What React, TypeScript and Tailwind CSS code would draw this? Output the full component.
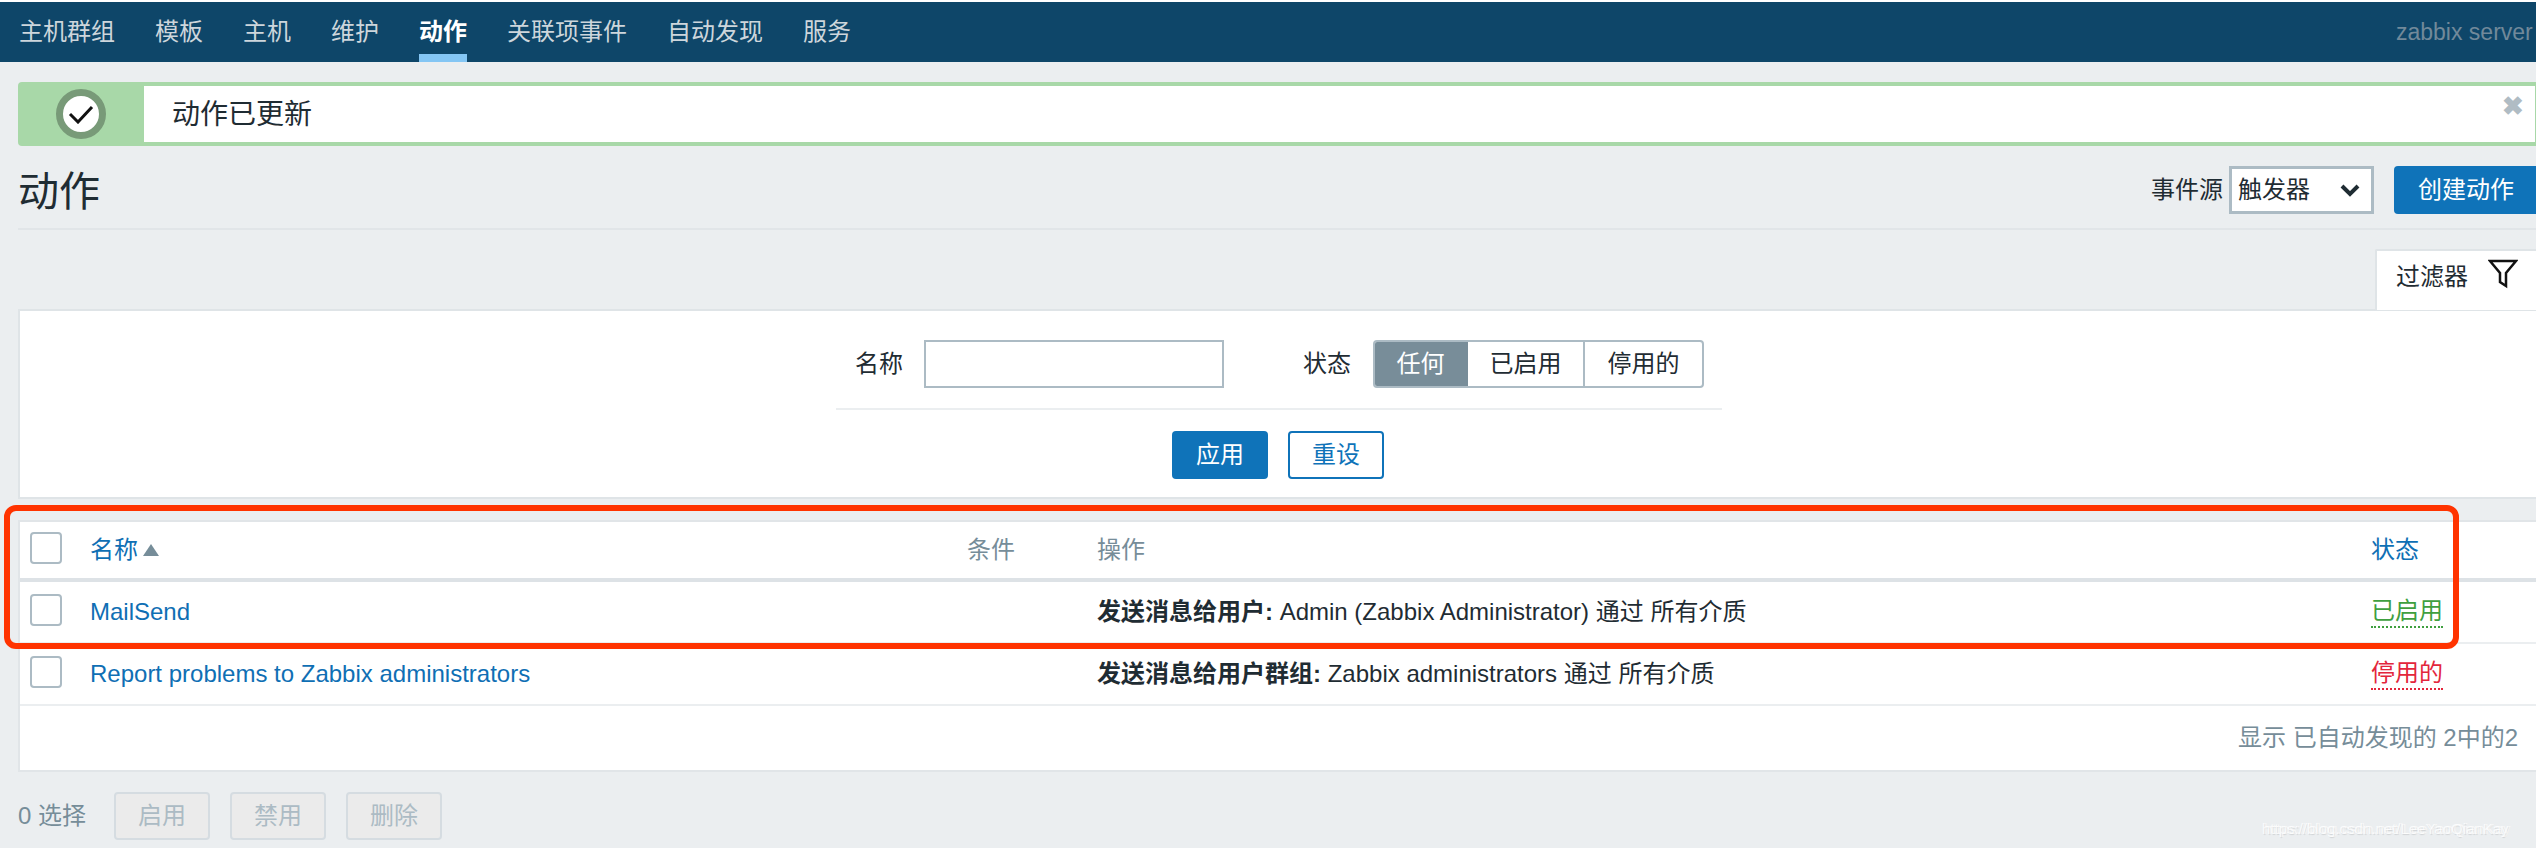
import React from 'react';

const NAV_ITEMS = ['主机群组', '模板', '主机', '维护', '动作', '关联项事件', '自动发现', '服务'];
const FONT = "font-['Liberation_Sans','Noto_Sans_CJK_SC',sans-serif]";

const Checkbox = () => (
  <span className="block w-[32px] h-[32px] -mt-[4px] shrink-0 rounded-[4px] border-[2px] border-[#acbbc4] bg-white" />
);

const ActionButton = ({ label }: { label: string }) => (
  <button className="w-[96px] h-[48px] rounded-[4px] border-[2px] border-[#d5dce1] bg-[#ebebeb] text-[#acbbc4] text-[24px]">
    {label}
  </button>
);

const Row = ({
  name,
  op,
  opRest,
  status,
  statusClass,
}: {
  name: string;
  op: string;
  opRest: string;
  status: string;
  statusClass: string;
}) => (
  <div className="flex items-center h-[62px] border-b-[2px] border-[#ebeef0]">
    <div className="w-[70px] pl-[10px]">
      <Checkbox />
    </div>
    <div className="w-[1007px] text-[#0f6fb4]">{name}</div>
    <div className="w-[1274px]">
      <b className="font-bold">{op}</b> {opRest}
    </div>
    <span className={`border-b-[2px] border-dotted leading-[30px] ${statusClass}`}>{status}</span>
  </div>
);

export default function App() {
  return (
    <div className={`relative w-[2536px] h-[848px] overflow-hidden bg-[#ebeef0] text-[24px] text-[#1f2c33] ${FONT}`}>
      {/* top bar */}
      <div className="h-[2px] bg-white" />
      <nav className="flex justify-between h-[60px] bg-[#0e4669] pl-[19px]">
        <div className="flex gap-[40px]">
          {NAV_ITEMS.map(item => (
            <div
              key={item}
              className={`h-[60px] pt-[15px] leading-[30px] border-b-[8px] ${
                item === '动作' ? 'text-white font-bold border-[#84c6f4]' : 'text-[#cdd6dc] border-transparent'
              }`}
            >
              {item}
            </div>
          ))}
        </div>
        <div className="whitespace-nowrap w-[140px] pt-[15px] text-[23px] leading-[30px] text-[#71899a]">zabbix server</div>
      </nav>

      {/* success message */}
      <div className="ml-[18px] mt-[20px] h-[64px] flex rounded-l-[4px] bg-[#a8d8a8] pr-[1px]">
        <div className="w-[126px] flex items-center justify-center">
          <div className="w-[50px] h-[50px] rounded-full border-[7px] border-[#789a78] bg-white flex items-center justify-center">
            <svg width="26" height="20" viewBox="0 0 26 20" fill="none">
              <path d="M2 10 L10 18 L24 3" stroke="#111" strokeWidth="3" />
            </svg>
          </div>
        </div>
        <div className="flex-1 my-[4px] bg-white flex justify-between pl-[28px] pr-[11px]">
          <span className="text-[28px] leading-[58px]">动作已更新</span>
          <span className="text-[#b0bcc4] text-[26px] font-bold leading-[40px]">✖</span>
        </div>
      </div>

      {/* title row */}
      <div className="ml-[18px] mt-[20px] h-[64px] pb-[16px] flex items-start justify-between border-b-[2px] border-[#e1e5e8]">
        <h1 className="text-[41px] leading-[52px]">动作</h1>
        <div className="flex items-center">
          <span className="w-[78px]">事件源</span>
          <div className="w-[145px] h-[48px] border-[3px] border-[#acbbc4] bg-white flex items-center justify-between pl-[6px] pr-[11px]">
            <span>触发器</span>
            <svg width="20" height="14" viewBox="0 0 20 14" fill="none">
              <path d="M2 3 L10 11 L18 3" stroke="#1f2c33" strokeWidth="4" />
            </svg>
          </div>
          <button className="ml-[20px] w-[142px] h-[48px] rounded-l-[4px] bg-[#0f73b9] text-white text-left pl-[24px]">
            创建动作
          </button>
        </div>
      </div>

      {/* filter tab */}
      <div className="flex justify-end mt-[19px]">
        <div className="w-[161px] h-[61px] bg-white border-l-[2px] border-t-[2px] border-[#dfe4e7] rounded-tl-[2px] flex items-start pl-[19px] pt-[8px]">
          <span className="leading-[36px] w-[92px]">过滤器</span>
          <svg width="30" height="30" viewBox="0 0 30 30" fill="none">
            <path d="M2 2 H28 L18 14 V27 L12 23 V14 Z" stroke="#111" strokeWidth="2.5" />
          </svg>
        </div>
      </div>

      {/* filter panel */}
      <div className="ml-[18px] h-[190px] -mt-[1px] bg-white border-y-[2px] border-l-[2px] border-[#dfe4e7]">
        <div className="flex pt-[29px] h-[97px] items-start">
          <span className="ml-[835px] w-[69px] leading-[48px]">名称</span>
          <div className="w-[300px] h-[48px] border-[2px] border-[#acbbc4]" />
          <span className="ml-[79px] w-[70px] leading-[48px]">状态</span>
          <div className="flex h-[48px] w-[331px] rounded-[4px] border-[2px] border-[#acbbc4] overflow-hidden">
            <div className="w-[95px] -my-[2px] -ml-[2px] bg-[#788d99] text-white text-center leading-[48px]">任何</div>
            <div className="w-[117px] border-r-[2px] border-[#acbbc4] text-center leading-[44px]">已启用</div>
            <div className="flex-1 text-center leading-[44px]">停用的</div>
          </div>
        </div>
        <div className="ml-[816px] w-[886px] h-[2px] bg-[#ebeef0]" />
        <div className="flex gap-[20px] mt-[21px] ml-[1152px]">
          <button className="w-[96px] h-[48px] rounded-[4px] bg-[#0f73b9] text-white">应用</button>
          <button className="w-[96px] h-[48px] rounded-[4px] border-[2px] border-[#0f73b9] bg-white text-[#0f73b9]">重设</button>
        </div>
      </div>

      {/* action list */}
      <div className="relative ml-[18px] mt-[21px] bg-white border-y-[2px] border-l-[2px] border-[#e1e5e8]">
        <div className="flex items-center h-[60px] border-b-[4px] border-[#dde2e6]">
          <div className="w-[70px] pl-[10px]">
            <Checkbox />
          </div>
          <div className="w-[877px] text-[#0f6fb4] flex items-center">
            名称
            <span className="ml-[5px] w-0 h-0 border-x-[8px] border-x-transparent border-b-[12px] border-b-[#768d99]" />
          </div>
          <div className="w-[130px] text-[#768d99]">条件</div>
          <div className="w-[1274px] text-[#768d99]">操作</div>
          <div className="text-[#0f6fb4]">状态</div>
        </div>
        <Row
          name="MailSend"
          op="发送消息给用户:"
          opRest="Admin (Zabbix Administrator) 通过 所有介质"
          status="已启用"
          statusClass="text-[#3f9f3f] border-[#3f9f3f]"
        />
        <Row
          name="Report problems to Zabbix administrators"
          op="发送消息给用户群组:"
          opRest="Zabbix administrators 通过 所有介质"
          status="停用的"
          statusClass="text-[#e3263c] border-[#e3263c]"
        />
        <div className="h-[64px] flex items-center justify-end pr-[18px] text-[#768d99]">显示 已自动发现的 2中的2</div>

        {/* hand-drawn highlight on the screenshot */}
        <div className="absolute -left-[16px] top-[-17px] w-[2455px] h-[144px] rounded-[12px] border-[6px] border-[#ff3300]" />
      </div>

      {/* footer actions */}
      <div className="flex items-center ml-[18px] mt-[20px] text-[#768d99]">
        <span className="w-[96px]">0 选择</span>
        <div className="flex gap-[20px]">
          <ActionButton label="启用" />
          <ActionButton label="禁用" />
          <ActionButton label="删除" />
        </div>
      </div>

      {/* blog watermark */}
      <div className="absolute left-[2262px] top-[816px] text-[15px] leading-[26px] text-white/80 whitespace-nowrap [text-shadow:2px_0_0_rgba(255,255,255,0.6),1px_1px_1px_rgba(0,0,0,0.12)]">
        https://blog.csdn.net/LeeYaoQianKay
      </div>
    </div>
  );
}
